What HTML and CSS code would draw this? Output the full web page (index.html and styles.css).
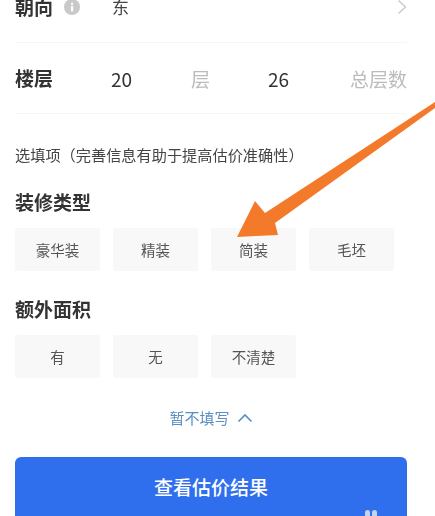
FILE: index.html
```html
<!DOCTYPE html>
<html lang="zh-CN">
<head>
<meta charset="utf-8">
<title>查看估价结果</title>
<link rel="stylesheet" href="styles.css">
</head>
<body>
<main class="page">
  <section class="rows">
    <div class="row">
      <span class="row-label">朝向</span>
      <svg class="info" viewBox="0 0 16 16" aria-hidden="true"><circle cx="8" cy="8" r="8" fill="#c9c9c9"/><rect x="7" y="7" width="2.2" height="5.4" fill="#fff"/><rect x="7" y="3.8" width="2.2" height="2" fill="#fff"/></svg>
      <span class="row-value">东</span>
      <svg class="chevron-right" viewBox="0 0 10 16" aria-hidden="true"><path d="M1.5 1.5 L8.5 8 L1.5 14.5" fill="none" stroke="#c8c8c8" stroke-width="1.3"/></svg>
    </div>
    <div class="row">
      <span class="row-label floor-label">楼层</span>
      <div class="field field-floor"><span class="num">20</span><span class="unit">层</span></div>
      <div class="field field-total"><span class="num">26</span><span class="unit">总层数</span></div>
    </div>
  </section>

  <p class="note">选填项（完善信息有助于提高估价准确性）</p>

  <h2 class="group-title title-first">装修类型</h2>
  <div class="chips">
    <span class="chip">豪华装</span>
    <span class="chip">精装</span>
    <span class="chip">简装</span>
    <span class="chip">毛坯</span>
  </div>

  <h2 class="group-title title-second">额外面积</h2>
  <div class="chips">
    <span class="chip">有</span>
    <span class="chip">无</span>
    <span class="chip">不清楚</span>
  </div>

  <div class="skip">
    <span>暂不填写</span>
    <svg class="chevron-up" viewBox="0 0 16 10" aria-hidden="true"><path d="M1.5 8.5 L8 2 L14.5 8.5" fill="none" stroke="#5b8fc4" stroke-width="1.7"/></svg>
  </div>

  <button class="submit" type="button">查看估价结果<span class="mark"><i></i><i></i></span></button>
</main>

<svg class="arrow" viewBox="0 0 435 516" aria-hidden="true">
  <path d="M435 102 L435 108 L275 223 L278 235 L237 237 L255 201 L265 213 Z" fill="#f47a2b"/>
</svg>
</body>
</html>
```

FILE: styles.css
```css
* { box-sizing: border-box; }

html, body {
  margin: 0;
  height: 516px;
  overflow: hidden;
  background: #fff;
}

body {
  position: relative;
  font-family: "Noto Sans CJK SC", "Noto Sans", sans-serif;
  color: #333;
}

.page {
  padding: 0 28px 0 15px;
  filter: blur(0.35px);
}

.rows {
  margin-top: -28px;
}

.row {
  display: flex;
  align-items: center;
  height: 71px;
  border-bottom: 1px solid #f6f6f6;
}

.row-label {
  font-size: 19px;
  font-weight: 700;
  line-height: 26px;
  color: #333;
}

.info {
  width: 16px;
  height: 16px;
  margin-left: 11px;
}

.row-value {
  margin-left: 32px;
  font-size: 17px;
  line-height: 24px;
  color: #444;
}

.chevron-right {
  width: 10px;
  height: 16px;
  margin-left: auto;
}

.floor-label {
  width: 96px;
}

.field {
  display: flex;
  align-items: center;
  justify-content: space-between;
}

.field-floor {
  width: 99px;
}

.field-total {
  flex: 1;
  margin-left: 58px;
}

.num {
  font-size: 19px;
  color: #333;
}

.unit {
  font-size: 19px;
  color: #bbb;
}

.note {
  margin: 28px 0 0;
  font-size: 15.2px;
  line-height: 24px;
  color: #444;
}

.group-title {
  margin: 0;
  font-size: 19px;
  font-weight: 700;
  line-height: 26px;
  color: #333;
}

.title-first {
  margin-top: 23px;
}

.title-second {
  margin-top: 25px;
}

.chips {
  display: flex;
  gap: 13px;
  margin-top: 13px;
}

.chip {
  display: flex;
  align-items: center;
  justify-content: center;
  width: 85px;
  height: 43px;
  background: #f8f8f8;
  border-radius: 2px;
  font-size: 14.5px;
  color: #555;
}

.skip {
  display: flex;
  align-items: center;
  justify-content: center;
  gap: 7px;
  margin-top: 28px;
  font-size: 15px;
  line-height: 24px;
  color: #5b8fc4;
}

.chevron-up {
  width: 16px;
  height: 10px;
}

.submit {
  position: relative;
  display: block;
  width: 100%;
  height: 70px;
  margin-top: 27px;
  padding: 0 0 11px;
  border: 0;
  border-radius: 6px;
  background: #2f6fed;
  font-family: inherit;
  font-size: 19px;
  font-weight: 500;
  color: #fff;
}

.mark {
  position: absolute;
  left: 350px;
  top: 53px;
  display: flex;
  gap: 2px;
}

.mark i {
  width: 5px;
  height: 12px;
  border-radius: 3px;
  background: #c4d4ea;
}

.arrow {
  position: absolute;
  left: 0;
  top: 0;
  width: 435px;
  height: 516px;
  filter: blur(0.4px);
}
```
